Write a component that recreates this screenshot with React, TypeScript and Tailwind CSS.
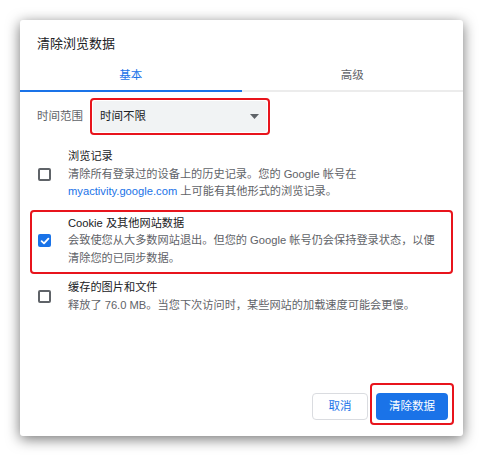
import React from 'react';

function Box({ checked }: { checked?: boolean }) {
  if (checked) {
    return (
      <div className="w-[13px] h-[13px] shrink-0 rounded-[2px] bg-[#1a73e8] flex items-center justify-center">
        <svg width="10" height="10" viewBox="0 0 10 10" fill="none">
          <path d="M1.6 5.2 L4 7.4 L8.4 2.6" stroke="#fff" strokeWidth="1.8" strokeLinecap="round" strokeLinejoin="round" />
        </svg>
      </div>
    );
  }
  return <div className="w-[13px] h-[13px] shrink-0 rounded-[2px] border-2 border-[#5f6368]" />;
}

function Row({
  checked,
  title,
  children,
}: {
  checked?: boolean;
  title: string;
  children: React.ReactNode;
}) {
  return (
    <div className="flex items-center">
      <Box checked={checked} />
      <div className="ml-[17px] text-[11.2px] leading-[17.5px] whitespace-nowrap">
        <div className="text-[#202124]">{title}</div>
        <div className="text-[#5f6368]">{children}</div>
      </div>
    </div>
  );
}

export default function App() {
  return (
    <div
      className="bg-white p-[20px] w-[483px] h-[457px]"
      style={{ fontFamily: '"Liberation Sans", "Noto Sans CJK SC", sans-serif' }}
    >
      <div className="w-[443px] h-[416px] bg-white rounded-[3px] shadow-[0_3px_14px_rgba(0,0,0,0.55)] flex flex-col">
        <div className="pt-[14px] pb-[6px] px-[17px] text-[13px] leading-[20px] text-[#202124]">
          清除浏览数据
        </div>

        <div className="flex border-b-2 border-[#ececec] h-[32px]">
          <div className="flex-1 flex items-center justify-center pt-[2px] text-[11.5px] text-[#1a73e8] border-b-2 border-[#1a73e8] -mb-[2px]">
            基本
          </div>
          <div className="flex-1 flex items-center justify-center pt-[2px] text-[11.5px] text-[#5f6368]">
            高级
          </div>
        </div>

        <div className="px-[10px]">
          <div className="flex items-center mt-[6px]">
            <div className="w-[60px] pl-[7px] text-[11.5px] text-[#5f6368]">时间范围</div>
            <div className="border-2 border-[#e8141c] rounded-[4px] p-[1px]">
              <div className="w-[174px] h-[31px] bg-[#f1f3f4] rounded-[3px] flex items-center justify-between pl-[7px] pr-[8px]">
                <span className="text-[11.5px] text-[#202124]">时间不限</span>
                <svg width="9" height="5" viewBox="0 0 9 5">
                  <path d="M0 0 L9 0 L4.5 5 Z" fill="#5f6368" />
                </svg>
              </div>
            </div>
          </div>

          <div className="mt-[13px] pl-[8px]">
            <Row title="浏览记录">
              清除所有登录过的设备上的历史记录。您的 Google 帐号在
              <br />
              <span className="text-[#1a73e8]">myactivity.google.com</span> 上可能有其他形式的浏览记录。
            </Row>
          </div>

          <div className="mt-[9px] border-2 border-[#e8141c] rounded-[4px] pl-[6px] pt-[3px] pb-[5px]">
            <Row checked title="Cookie 及其他网站数据">
              会致使您从大多数网站退出。但您的 Google 帐号仍会保持登录状态，以便
              <br />
              清除您的已同步数据。
            </Row>
          </div>

          <div className="mt-[5px] pl-[8px]">
            <Row title="缓存的图片和文件">释放了 76.0 MB。当您下次访问时，某些网站的加载速度可能会更慢。</Row>
          </div>
        </div>

        <div className="mt-auto flex justify-end items-end pr-[9px] pb-[11px]">
          <button className="w-[56px] h-[27px] mb-[5px] border border-[#dadce0] rounded-[4px] text-[11.5px] text-[#1a73e8] bg-white">
            取消
          </button>
          <div className="ml-[2px] border-2 border-[#e8141c] rounded-[4px] pt-[8px] pb-[3px] px-[4px]">
            <button className="w-[72px] h-[27px] rounded-[4px] bg-[#1a73e8] text-white text-[11.5px]">
              清除数据
            </button>
          </div>
        </div>
      </div>
    </div>
  );
}
